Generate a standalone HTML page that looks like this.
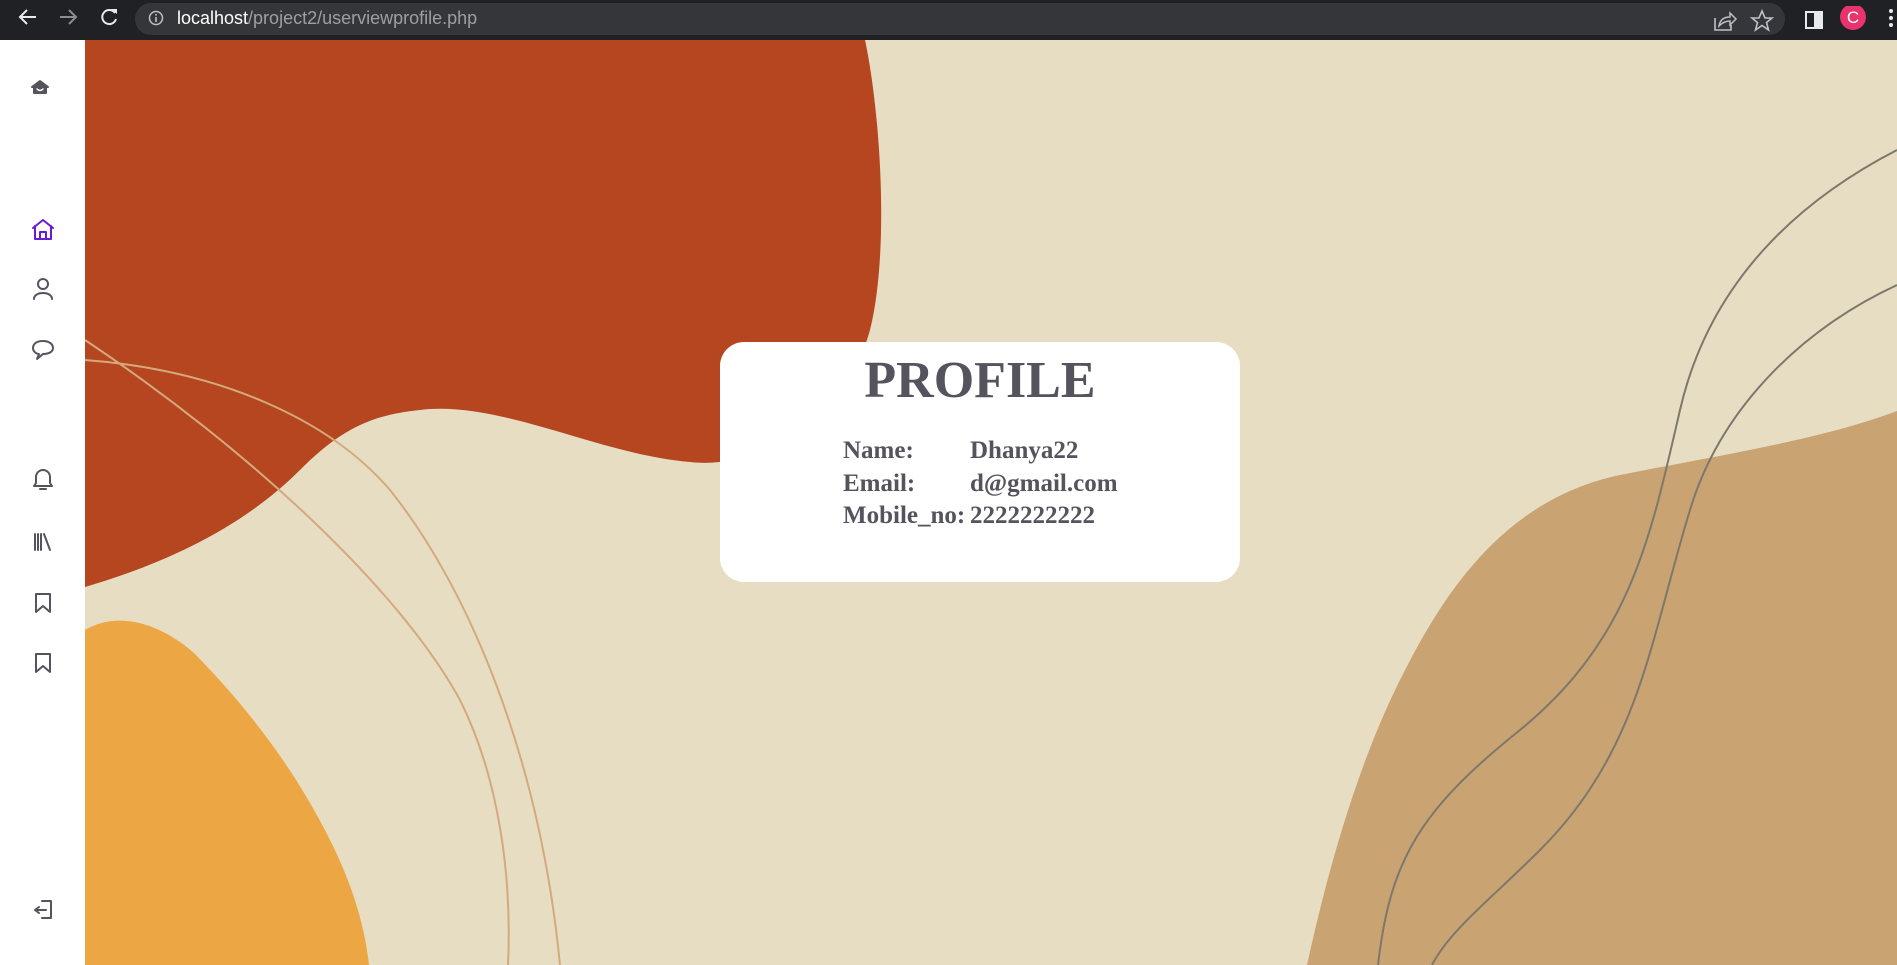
<!DOCTYPE html>
<html><head><meta charset="utf-8"><style>
*{margin:0;padding:0;box-sizing:border-box}
body{width:1897px;height:965px;overflow:hidden;background:#e7ddc3;font-family:"Liberation Sans",sans-serif;position:relative}
.chrome{position:absolute;left:0;top:0;width:1897px;height:40px;background:#202124}
.pill{position:absolute;left:135px;top:3px;width:1650px;height:32px;border-radius:16px;background:#35363a}
.url{position:absolute;left:177px;top:8px;font-size:18px;color:#9aa0a6}
.url b{font-weight:normal;color:#fff}
.side{position:absolute;left:0;top:40px;width:85px;height:925px;background:#fff}
.card{position:absolute;left:720px;top:342px;width:520px;height:240px;background:#fff;border-radius:24px;font-family:"Liberation Serif",serif;font-weight:bold;color:#55535d}
.card h1{position:absolute;left:0;width:100%;top:9px;text-align:center;font-size:52px;line-height:60px}
.row{position:absolute;left:123px;font-size:25px;line-height:30px}
.row span{position:absolute;left:127px;white-space:nowrap}
</style></head><body>
<svg style="position:absolute;left:0;top:0" width="1897" height="965">
<path d="M85 40 L865 40 C880 110 890 250 870 330 C845 420 760 470 690 462 C600 455 500 400 420 410 C370 415 340 430 300 470 C240 530 160 565 85 587 Z" fill="#b5461f"/>
<path d="M85 630 C110 615 150 615 194 653 C240 700 290 760 330 840 C355 890 365 930 369 965 L85 965 Z" fill="#eda644"/>
<path d="M1307 965 C1330 860 1360 760 1400 680 C1440 600 1500 500 1620 475 C1720 455 1820 440 1897 411 L1897 965 Z" fill="#c9a372"/>
<path d="M85 340 C250 450 400 590 460 700 C500 780 512 880 508 965" stroke="#d4a97d" stroke-width="2" fill="none"/>
<path d="M85 360 C220 370 330 420 390 490 C470 590 540 760 560 965" stroke="#d4a97d" stroke-width="2" fill="none"/>
<path d="M1897 150 C1800 200 1710 280 1680 410 C1650 540 1630 640 1520 730 C1420 810 1390 860 1378 965" stroke="#7d786c" stroke-width="2" fill="none"/>
<path d="M1897 285 C1800 330 1720 410 1690 510 C1650 640 1640 750 1540 850 C1490 900 1450 930 1432 965" stroke="#7d786c" stroke-width="2" fill="none"/>
</svg>
<div class="chrome">
<svg style="position:absolute;left:0;top:0" width="1897" height="40">
<path d="M36 17 H20 M27 10 L20 17 L27 24" stroke="#e8eaed" stroke-width="2" fill="none"/>
<path d="M60 17 H76 M69 10 L76 17 L69 24" stroke="#8a8d91" stroke-width="2" fill="none"/>
<path d="M115 13 A7 7 0 1 0 116 19" stroke="#e8eaed" stroke-width="2" fill="none"/><path d="M111 9 L117 9 L117 14 Z" fill="#e8eaed"/>
</svg>
<div class="pill"></div>
<svg style="position:absolute;left:148px;top:10px" width="16" height="16"><circle cx="8" cy="8" r="6.5" stroke="#bdc1c6" stroke-width="1.5" fill="none"/><rect x="7.2" y="7" width="1.6" height="5" fill="#bdc1c6"/><rect x="7.2" y="4" width="1.6" height="1.6" fill="#bdc1c6"/></svg>
<div class="url"><b>localhost</b>/project2/userviewprofile.php</div>
<svg style="position:absolute;left:1710px;top:6px" width="187" height="30">
<path d="M5 12 V24 H21 V19" stroke="#bdc1c6" stroke-width="1.6" fill="none"/><path d="M9 20 C10 14 14 11 20 11 V7 L26 13 L20 19 V15 C15 15 12 17 9 20Z" stroke="#bdc1c6" stroke-width="1.5" fill="none"/>
<path d="M52 5 L55 12 L62 12 L56.5 16.5 L58.5 24 L52 19.5 L45.5 24 L47.5 16.5 L42 12 L49 12 Z" stroke="#bdc1c6" stroke-width="1.6" fill="none"/>
<rect x="96" y="6" width="16" height="16" fill="none" stroke="#e8eaed" stroke-width="2"/><rect x="104" y="6" width="8" height="16" fill="#e8eaed"/>
<circle cx="143" cy="11" r="13" fill="#e8336f"/><text x="143" y="17" font-size="17" fill="#fff" text-anchor="middle" font-family="Liberation Sans">C</text>
<circle cx="181" cy="5" r="2" fill="#e8eaed"/><circle cx="181" cy="12" r="2" fill="#e8eaed"/><circle cx="181" cy="19" r="2" fill="#e8eaed"/>
</svg>
</div>
<div class="side">
<svg style="position:absolute;left:0;top:0" width="85" height="925" fill="none" stroke="#55535d" stroke-width="2" stroke-linecap="round" stroke-linejoin="round">
<path d="M32 47 L40 41 L48 47 Z M34 47 V53 H46 V47" fill="#55535d" stroke="#55535d"/><path d="M37 49 Q40 52 43 49" stroke="#fff" stroke-width="1.5"/>
<g stroke="#6a1bd6"><path d="M33 188 L43 180 L53 188 M35 186 V199 H51 V186"/><rect x="40" y="192" width="6" height="7"/></g>
<circle cx="43" cy="244" r="5"/><path d="M34 259 C34 251 52 251 52 259"/>
<path d="M43 301 C34 301 33 306 33 308 C33 312 37 314 39 314 L37 319 L43 314 C50 314 53 311 53 308 C53 304 49 301 43 301Z"/>
<path d="M36 443 V437 A7 7 0 0 1 50 437 V443 L52 446 H34 Z M40 449 H46"/>
<path d="M35 494 V510 M38 494 V510 M41 494 V510 M44 494 L50 510"/>
<path d="M36 554 H50 V572 L43 566 L36 572 Z"/>
<path d="M36 614 H50 V632 L43 626 L36 632 Z"/>
<path d="M42 861 H51 V878 H42 M46 870 H36 M39 867 L35 870 L39 873"/>
</svg>
</div>
<div class="card">
<h1>PROFILE</h1>
<div class="row" style="top:94px">Name:<span>Dhanya22</span></div>
<div class="row" style="top:127px">Email:<span>d@gmail.com</span></div>
<div class="row" style="top:159px">Mobile_no:<span>2222222222</span></div>
</div>
</body></html>
